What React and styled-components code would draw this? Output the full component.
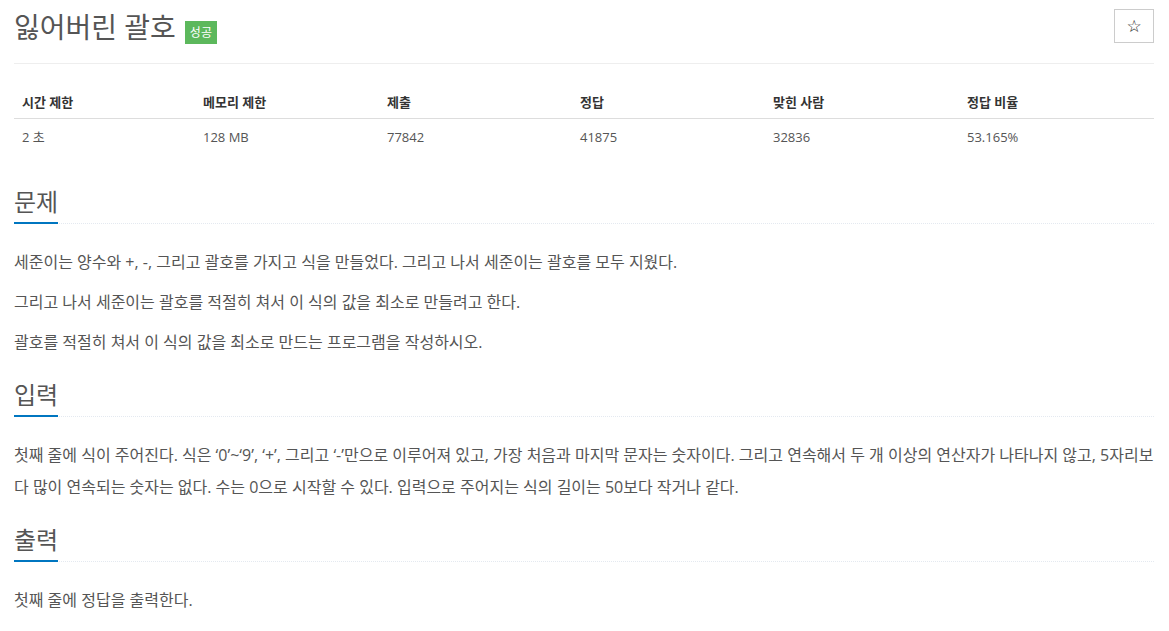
import React from 'react'
import styled, { createGlobalStyle } from 'styled-components'

const Global = createGlobalStyle`
    body {
        margin: 0;
        background: #fff;
        font-family: "Open Sans", "Noto Sans CJK KR", sans-serif;
        color: #555;
    }
`
const Page = styled.div`
    width: 1140px;
    padding: 0 15px 0 14px;
`
const TitleBar = styled.div`
    display: flex;
    align-items: flex-start;
    justify-content: space-between;
    height: 54px;
    padding-top: 9px;
    border-bottom: 1px solid #eee;
    margin-bottom: 20px;
`
const TitleLeft = styled.div`
    display: flex;
    align-items: flex-start;
`
const H1 = styled.h1`
    margin: 0;
    font-size: 28px;
    font-weight: 400;
    line-height: 36px;
    color: #555;
`
const Badge = styled.span`
    margin-left: 9px;
    margin-top: 12px;
    padding: 0 5px;
    height: 23px;
    line-height: 23px;
    font-size: 12px;
    color: #fff;
    background: #5cb85c;
`
const StarBtn = styled.button`
    width: 40px;
    height: 34px;
    border: 1px solid #ccc;
    background: #fff;
    color: #222;
    font-size: 17px;
    line-height: 1;
    font-family: "DejaVu Sans", sans-serif;
    padding: 0;
`
const Table = styled.table`
    width: 100%;
    border-collapse: collapse;
    margin-bottom: 34px;
    font-size: 13px;
    th, td {
        text-align: left;
        padding: 8px;
        line-height: 20px;
    }
    th {
        padding-bottom: 6px;
        color: #333;
        font-weight: 700;
        border-bottom: 1px solid #ddd;
    }
    td {
        color: #555;
    }
`
const Headline = styled.div`
    border-bottom: 1px dotted #e4e9f0;
    margin: 24px 0 22px;
    height: 34px;
`
const H2 = styled.h2`
    display: inline-block;
    margin: 0;
    padding-bottom: 7px;
    font-size: 24px;
    font-weight: 400;
    line-height: 26px;
    color: #555;
    border-bottom: 2px solid #0076c0;
`
const P = styled.p`
    margin: 0 0 8px;
    font-size: 16px;
    line-height: 32px;
    color: #555;
`

const cols = [181, 184, 193, 193, 194, 195]
const head = ['시간 제한', '메모리 제한', '제출', '정답', '맞힌 사람', '정답 비율']
const row = ['2 초', '128 MB', '77842', '41875', '32836', '53.165%']

function Section({ title, children }) {
    return (
        <section>
            <Headline><H2>{title}</H2></Headline>
            {children}
        </section>
    )
}

export default function App() {
    return (
        <Page>
            <Global />
            <TitleBar>
                <TitleLeft>
                    <H1>잃어버린 괄호</H1>
                    <Badge>성공</Badge>
                </TitleLeft>
                <StarBtn>☆</StarBtn>
            </TitleBar>
            <Table>
                <colgroup>
                    {cols.map((w, i) => <col key={i} style={{ width: w }} />)}
                </colgroup>
                <thead>
                    <tr>{head.map(h => <th key={h}>{h}</th>)}</tr>
                </thead>
                <tbody>
                    <tr>{row.map(c => <td key={c}>{c}</td>)}</tr>
                </tbody>
            </Table>
            <Section title="문제">
                <P>세준이는 양수와 +, -, 그리고 괄호를 가지고 식을 만들었다. 그리고 나서 세준이는 괄호를 모두 지웠다.</P>
                <P>그리고 나서 세준이는 괄호를 적절히 쳐서 이 식의 값을 최소로 만들려고 한다.</P>
                <P>괄호를 적절히 쳐서 이 식의 값을 최소로 만드는 프로그램을 작성하시오.</P>
            </Section>
            <Section title="입력">
                <P>첫째 줄에 식이 주어진다. 식은 ‘0’~‘9’, ‘+’, 그리고 ‘-’만으로 이루어져 있고, 가장 처음과 마지막 문자는 숫자이다. 그리고 연속해서 두 개 이상의 연산자가 나타나지 않고, 5자리보다 많이 연속되는 숫자는 없다. 수는 0으로 시작할 수 있다. 입력으로 주어지는 식의 길이는 50보다 작거나 같다.</P>
            </Section>
            <Section title="출력">
                <P>첫째 줄에 정답을 출력한다.</P>
            </Section>
        </Page>
    )
}
